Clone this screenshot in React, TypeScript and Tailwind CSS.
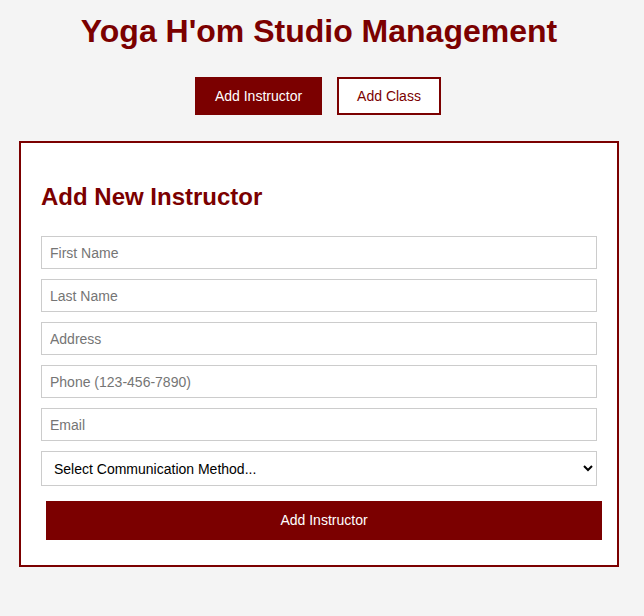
import { useState } from 'react'

const fields = ['First Name', 'Last Name', 'Address', 'Phone (123-456-7890)', 'Email']

export default function App() {
  const [tab, setTab] = useState('instructor')

  return (
    <div className="min-h-screen bg-[#f4f4f4] font-['Liberation_Sans',Arial,sans-serif]">
      <div className="w-[638px] flex flex-col items-center pt-[13px]">
        <h1 className="text-[32px] leading-[37px] font-bold text-[#7b0000]">Yoga H'om Studio Management</h1>

        {/* Tab buttons */}
        <div className="flex gap-[15px] mt-[27px] pr-[2px]">
          <button
            onClick={() => setTab('instructor')}
            className="w-[127px] h-[38px] border-2 border-[#7b0000] bg-[#7b0000] text-white text-[14px]"
          >
            Add Instructor
          </button>
          <button
            onClick={() => setTab('class')}
            className="w-[104px] h-[38px] border-2 border-[#7b0000] bg-white text-[#7b0000] text-[14px]"
          >
            Add Class
          </button>
        </div>

        {/* Form card */}
        <div className="w-[600px] mt-[26px] border-2 border-[#7b0000] bg-white px-5 pt-10 pb-[25px]">
          <h2 className="text-[24px] leading-[28px] font-bold text-[#7b0000]">
            {tab === 'instructor' ? 'Add New Instructor' : 'Add New Class'}
          </h2>
          <form className="flex flex-col mt-[25px]" onSubmit={(e) => e.preventDefault()}>
            {fields.map((f) => (
              <input
                key={f}
                type="text"
                placeholder={f}
                className="h-[33px] mb-[10px] border border-[#cccccc] px-2 text-[14px] text-black placeholder:text-[#757575] outline-none"
              />
            ))}
            <select className="h-[35px] border border-[#cccccc] bg-white px-2 text-[14px] text-black outline-none">
              <option>Select Communication Method...</option>
              <option>Email</option>
              <option>Phone</option>
              <option>Text</option>
            </select>
            <button
              type="submit"
              className="ml-[5px] mt-[15px] w-[556px] h-[39px] bg-[#7b0000] text-white text-[14px]"
            >
              Add Instructor
            </button>
          </form>
        </div>
      </div>
    </div>
  )
}
